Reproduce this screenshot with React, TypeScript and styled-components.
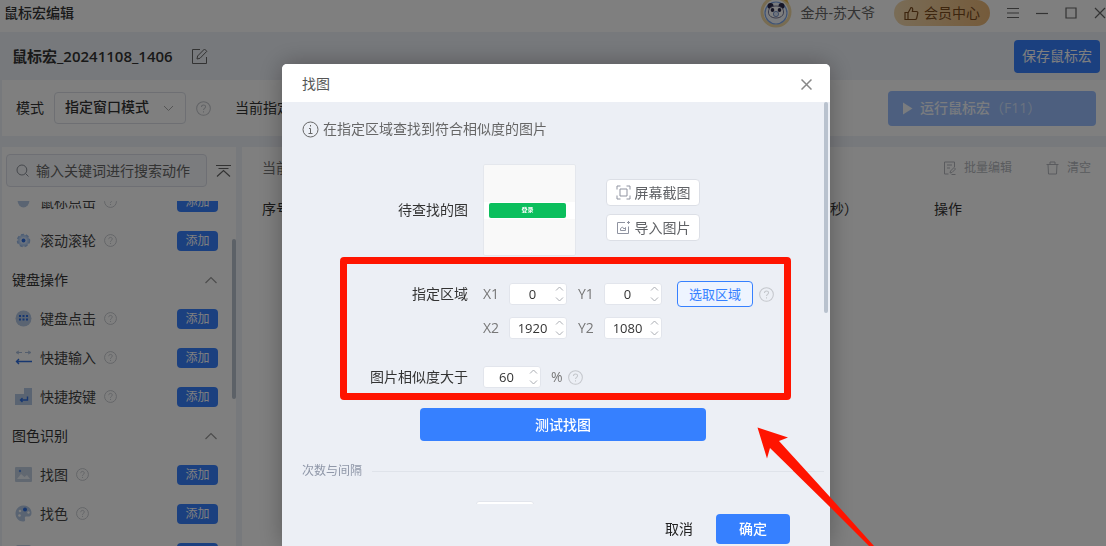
import React from "react";
import styled, { createGlobalStyle, css } from "styled-components";

const Global = createGlobalStyle`
  * { box-sizing: border-box; }
  body {
    margin: 0;
    background: #eff2f8;
    color: #333;
    font: 14px/20px "Open Sans", "Noto Sans CJK SC", sans-serif;
    overflow: hidden;
  }
  button, input, select { font: inherit; color: inherit; }
  button { cursor: pointer; }
  svg { display: block; flex: none; }
`;

const blue = "#3680ff";

const bareButton = css`
  display: flex;
  align-items: center;
  border: 0;
  padding: 0;
  background: none;
  white-space: nowrap;
`;

const Page = styled.div`
  display: flex;
  flex-direction: column;
  height: 100vh;
  overflow: hidden;
`;

const TitleBar = styled.header`
  display: flex;
  align-items: center;
  justify-content: space-between;
  height: 32px;
  padding: 0 0 6px 4px;
  background: #fff;
`;

const WindowTitle = styled.span`
  font-weight: 500;
`;

const TitleTools = styled.div`
  display: flex;
  align-items: center;
  color: #666;
`;

const UserName = styled.span`
  margin: 0 19px 0 8px;
`;

const MemberButton = styled.button`
  ${bareButton}
  gap: 5px;
  height: 26px;
  margin-right: 17px;
  padding: 0 10px;
  border-radius: 13px;
  background: linear-gradient(90deg, #f3d9ae, #eab676);
  color: #7a4a1c;
`;

const WindowButtons = styled.div`
  display: flex;
  gap: 17px;
`;

const IconButton = styled.button`
  ${bareButton}
  color: #666;
`;

const NameBar = styled.div`
  display: flex;
  align-items: center;
  gap: 18px;
  height: 48px;
  padding: 0 6px 0 12px;
`;

const MacroName = styled.h1`
  margin: 0;
  font-size: 15px;
  line-height: 20px;
  font-weight: 600;
`;

const SaveButton = styled.button`
  ${bareButton}
  justify-content: center;
  width: 86px;
  height: 33px;
  margin-left: auto;
  border-radius: 4px;
  background: ${blue};
  color: #fff;
`;

const ModeBar = styled.div`
  display: flex;
  align-items: center;
  height: 56px;
  margin-left: 2px;
  padding: 0 10px 0 14px;
  background: #fff;
`;

const SelectBox = styled.div`
  display: grid;
  align-items: center;
  width: 132px;
  margin: 0 10px;
  > * { grid-area: 1 / 1; }
  > svg { justify-self: end; margin-right: 12px; pointer-events: none; }
`;

const ModeSelect = styled.select`
  appearance: none;
  height: 32px;
  width: 100%;
  padding: 0 10px 2px;
  border: 1px solid #dcdfe6;
  border-radius: 4px;
  background: #fff;
  font-weight: 500;
`;

const TargetLabel = styled.span`
  margin-left: 24px;
`;

const RunButton = styled.button`
  ${bareButton}
  gap: 7px;
  width: 208px;
  height: 35px;
  margin-left: auto;
  padding: 0 14px;
  border-radius: 4px;
  background: #9abfff;
  color: #f4f8ff;
  font-weight: 500;
  small { font-size: 14px; font-weight: 400; color: #d4e4ff; }
`;

const Workspace = styled.div`
  display: flex;
  flex: 1;
  gap: 6px;
  min-height: 0;
  padding: 11px 0 0 2px;
`;

const Sidebar = styled.aside`
  display: flex;
  flex-direction: column;
  width: 234px;
  flex: none;
  background: #fff;
`;

const SearchRow = styled.div`
  display: flex;
  align-items: center;
  gap: 9px;
  padding: 7px 5px 14px 4px;
`;

const SearchBox = styled.label`
  display: flex;
  align-items: center;
  gap: 6px;
  flex: 1;
  min-width: 0;
  height: 33px;
  padding: 0 8px;
  border: 1px solid #dcdfe8;
  border-radius: 4px;
  background: #f7f9fc;
  color: #8a8f99;
`;

const SearchInput = styled.input`
  flex: 1;
  min-width: 0;
  padding: 0;
  border: 0;
  background: none;
  outline: 0;
  &::placeholder { color: #666; opacity: 1; }
`;

const ListViewport = styled.div`
  display: flex;
  flex: 1;
  min-height: 0;
  overflow: hidden;
`;

const ActionList = styled.ul`
  flex: 1;
  margin: -19px 0 0;
  padding: 0 14px 0 10px;
  list-style: none;
`;

const ListThumb = styled.div`
  width: 4px;
  height: 160px;
  margin-top: 38px;
  border-radius: 2px;
  background: #b9c2ce;
`;

const SectionRow = styled.li`
  display: flex;
  align-items: center;
  justify-content: space-between;
  height: 39px;
  color: #333;
`;

const ActionRow = styled.li`
  display: flex;
  align-items: center;
  height: 39px;
  padding-left: 3px;
`;

const ActionName = styled.span`
  margin: 0 8px 0 8px;
  color: #444;
`;

const AddButton = styled.button`
  ${bareButton}
  justify-content: center;
  width: 41px;
  height: 20px;
  margin-left: auto;
  border-radius: 4px;
  background: ${blue};
  color: #fff;
  font-size: 12px;
`;

const Main = styled.main`
  flex: 1;
  min-width: 0;
  background: #fff;
`;

const MainTools = styled.div`
  display: flex;
  align-items: center;
  gap: 34px;
  height: 42px;
  padding: 0 15px 0 20px;
  color: #777;
`;

const ListTitle = styled.span`
  margin-right: auto;
`;

const ToolButton = styled.button`
  ${bareButton}
  gap: 8px;
  color: #b4b7bd;
  font-size: 12px;
`;

const StepTable = styled.table`
  width: 100%;
  table-layout: fixed;
  border-collapse: collapse;
`;

const StepHead = styled.th<{ $width?: number }>`
  width: ${(p) => (p.$width ? `${p.$width}px` : "auto")};
  height: 40px;
  padding: 0 0 0 20px;
  text-align: left;
  font-weight: 400;
  white-space: nowrap;
`;

const Scrim = styled.div`
  position: fixed;
  inset: 0;
  display: flex;
  justify-content: center;
  padding: 64px 0 0 6px;
  background: rgba(0, 0, 0, 0.5);
`;

const Dialog = styled.section`
  position: relative;
  display: flex;
  flex-direction: column;
  width: 548px;
  max-width: 100%;
  border-radius: 5px 5px 0 0;
  background: #eceff5;
  box-shadow: 0 0 24px rgba(0, 0, 0, 0.3);
`;

const DialogHead = styled.header`
  display: flex;
  align-items: center;
  justify-content: space-between;
  flex: none;
  height: 38px;
  padding: 2px 18px 0 20px;
  border-radius: 5px 5px 0 0;
  background: #fff;
  color: #555;
`;

const DialogTitle = styled.h2`
  margin: 0;
  font-size: 14px;
  line-height: 20px;
  font-weight: 400;
`;

const DialogBody = styled.div`
  display: flex;
  flex: 1;
  min-height: 0;
  overflow: hidden;
  padding-right: 2px;
`;

const Form = styled.form`
  flex: 1;
  min-width: 0;
`;

const DialogThumb = styled.div`
  width: 4px;
  height: 211px;
  border-radius: 2px;
  background: #b9c2ce;
`;

const Hint = styled.p`
  display: flex;
  align-items: center;
  gap: 4px;
  height: 54px;
  margin: 0 0 8px;
  padding-left: 20px;
  color: #666;
`;

const Row = styled.div<{ $space?: number }>`
  display: grid;
  grid-template-columns: 186px 1fr;
  gap: 15px;
  align-items: center;
  margin-bottom: ${(p) => p.$space ?? 0}px;
`;

const RowLabel = styled.span`
  text-align: right;
`;

const Field = styled.div<{ $gap?: number }>`
  display: flex;
  align-items: center;
  gap: ${(p) => p.$gap ?? 0}px;
  color: #777;
`;

const Preview = styled.div`
  display: flex;
  flex-direction: column;
  justify-content: center;
  width: 93px;
  height: 92px;
  border: 1px solid #e4e7ed;
  border-radius: 2px;
  background: #f9f9f9;
`;

const PreviewStrip = styled.div`
  padding: 1px 9px 1px 5px;
  background: #fff;
`;

const PreviewLogin = styled.div`
  height: 15px;
  border-radius: 2px;
  background: #0bbf5d;
  color: #fff;
  font-size: 6px;
  line-height: 15px;
  font-weight: 700;
  text-align: center;
`;

const PictureButtons = styled.div`
  display: flex;
  flex-direction: column;
  gap: 8px;
`;

const PictureButton = styled.button`
  ${bareButton}
  justify-content: center;
  gap: 4px;
  width: 94px;
  height: 27px;
  border: 1px solid #dcdfe6;
  border-radius: 4px;
  background: #fff;
  color: #606266;
  > svg { color: #8f93a0; }
`;

const CoordLabel = styled.label`
  display: flex;
  align-items: center;
`;

const CoordName = styled.span`
  width: 26px;
`;

const NumberBox = styled.span`
  display: inline-flex;
  align-items: center;
  width: 58px;
  height: 22px;
  padding-right: 2px;
  border: 1px solid #e2e5ec;
  border-radius: 3px;
  background: #fff;
`;

const NumberInput = styled.input`
  flex: 1;
  min-width: 0;
  padding: 0;
  border: 0;
  outline: 0;
  background: none;
  color: #333;
  font-size: 13px;
  line-height: 20px;
  text-align: center;
`;

const PickButton = styled.button`
  ${bareButton}
  justify-content: center;
  width: 76px;
  height: 26px;
  margin: 0 6px 0 4px;
  border: 1px solid ${blue};
  border-radius: 4px;
  background: #eef4ff;
  color: ${blue};
  font-size: 13px;
`;

const TestButton = styled.button`
  ${bareButton}
  justify-content: center;
  width: 286px;
  height: 33px;
  margin-left: 138px;
  border-radius: 4px;
  background: ${blue};
  color: #fff;
  font-weight: 500;
`;

const Divider = styled.div`
  display: flex;
  align-items: center;
  gap: 10px;
  height: 60px;
  padding-left: 20px;
  color: #8f97a8;
  font-size: 12px;
  &::after { content: ""; flex: 1; height: 1px; background: #dfe3ea; }
`;

const CountRow = styled.div`
  padding-left: 194px;
`;

const DialogFoot = styled.footer`
  display: flex;
  align-items: center;
  justify-content: flex-end;
  gap: 23px;
  flex: none;
  height: 42px;
  padding: 7px 40px 0 0;
`;

const CancelButton = styled.button`
  ${bareButton}
  color: #222;
`;

const OkButton = styled.button`
  ${bareButton}
  justify-content: center;
  width: 74px;
  height: 30px;
  border-radius: 4px;
  background: ${blue};
  color: #fff;
  font-weight: 500;
`;

const Frame = styled.div`
  position: absolute;
  left: 58px;
  top: 193px;
  width: 451px;
  height: 143px;
  border: 7px solid #ff1400;
  border-radius: 4px;
  pointer-events: none;
`;

const Arrow = styled.svg`
  position: absolute;
  left: 475px;
  top: 363px;
  pointer-events: none;
`;

const Line = ({ d, w = 16, h = w, box = `0 0 ${w} ${h}`, sw = 1, color = "currentColor" }: {
  d: string; w?: number; h?: number; box?: string; sw?: number; color?: string;
}) => (
  <svg width={w} height={h} viewBox={box} fill="none" stroke={color} strokeWidth={sw} aria-hidden="true">
    <path d={d} />
  </svg>
);

const Help = ({ size = 13 }: { size?: number }) => (
  <svg width={size} height={size} viewBox="0 0 16 16" fill="none" stroke="#c4c7cc" strokeWidth="1.1" aria-hidden="true">
    <circle cx="8" cy="8" r="7.3" />
    <path d="M5.8 6.4C5.8 3.4 10.2 3.5 10.2 6.2C10.2 7.8 8 7.8 8 9.6M8 11v1.3" />
  </svg>
);

const Avatar = () => (
  <svg width="32" height="26" viewBox="0 2 32 26" overflow="visible" aria-hidden="true">
    <circle cx="16" cy="14" r="14" fill="#fff" stroke="#f0d9a4" strokeWidth="3" />
    <path d="M21 0l6 1 2 5z" fill="#e9b94c" />
    <circle cx="16" cy="15" r="11" fill="#f4f8ff" stroke="#7ea6e8" strokeWidth="1.2" />
    <circle cx="10.5" cy="8" r="3" fill="#2c2b4a" />
    <circle cx="21.5" cy="8" r="3" fill="#2c2b4a" />
    <path d="M8.5 14C8 6 24 6 23.500 14C24 22 8 22 8.500 14z" fill="#fff" stroke="#55557a" strokeWidth=".8" />
    <ellipse cx="12.500" cy="12" rx="1.800" ry="2" fill="#2c2b4a" />
    <ellipse cx="19.500" cy="12" rx="1.800" ry="2" fill="#2c2b4a" />
    <circle cx="16" cy="16" r="2.600" fill="#dfe9fb" stroke="#6f8fc8" strokeWidth=".9" />
  </svg>
);

const art: Record<string, React.ReactNode> = {
  mouse: <path d="M2.500 3h12v4a6 7.500 0 0 1-12 0z" fill="#b4c8e4" />,
  wheel: (
    <>
      <circle cx="8.500" cy="8.500" r="6" fill="#b9d2f6" stroke="#9dbdea" strokeDasharray="3 2" strokeWidth="1.500" />
      <circle cx="8.500" cy="8.500" r="3.600" fill="#d5e5fc" />
      <circle cx="8.500" cy="8.500" r="1.900" fill="#2f6fe0" />
    </>
  ),
  keys: (
    <>
      <circle cx="8.500" cy="8.500" r="8" fill="#b4c8e4" />
      <path d="M4 6h2M7.500 6h2M11 6h2M4 9.500h2M7.500 9.500h2M11 9.500h2" stroke="#2f6fe0" strokeWidth="1.800" />
    </>
  ),
  swap: (
    <>
      <path d="M2 3.500h5M10 3.500h5M13 2l3 1.500-3 1.500M4 2L1 3.500 4 5" stroke="#a9bdda" fill="none" />
      <path d="M17 12.500H1.500M4 10l-2.500 2.500L4 15" stroke="#2f6fe0" strokeWidth="1.400" fill="none" />
    </>
  ),
  enter: (
    <>
      <path d="M9 0h8v17H0V6h9z" fill="#b4c8e4" />
      <path d="M12.500 8.500V12H5.500M7.500 10L5.500 12l2 2" stroke="#2f6fe0" strokeWidth="1.400" fill="none" />
    </>
  ),
  picture: (
    <>
      <rect x="0" y="1" width="17" height="15" rx="1" fill="#c3d0e2" />
      <path d="M2 13l4-5 3.500 3 2.500-2 3 4z" fill="#edf2f9" />
      <circle cx="5" cy="5" r="1.200" fill="#5d8fe0" />
    </>
  ),
  palette: (
    <>
      <path d="M8.500.5C13 .5 16.500 3.500 16.500 8c0 3-2 4-4.500 3.500-2-.5-2.500 1-2 2.500.6 1.800-.5 2.500-2 2.500C4 16.500.5 13 .5 8.500S4 .5 8.500.5z" fill="#b4c8e4" />
      <circle cx="10" cy="4.500" r="2" fill="#2f6fe0" />
      <circle cx="5" cy="6" r="1.300" fill="#fff" />
      <circle cx="4.500" cy="10.500" r="1.300" fill="#fff" />
      <circle cx="13.500" cy="7.500" r="1.200" fill="#fff" />
    </>
  ),
  text: <rect x="1" y="1" width="15" height="15" rx="2" fill="#c3d0e2" />,
};

const Action = ({ icon, name }: { icon: string; name: string }) => (
  <ActionRow>
    <svg width="17" height="17" viewBox="0 0 17 17" aria-hidden="true">{art[icon]}</svg>
    <ActionName>{name}</ActionName>
    <Help />
    <AddButton type="button">添加</AddButton>
  </ActionRow>
);

const Section = ({ name }: { name: string }) => (
  <SectionRow>
    {name}
    <Line w={14} h={8} d="M1.500 7L7 1.500L12.500 7" color="#999" sw={1.200} />
  </SectionRow>
);

const Stepper = ({ value, label }: { value: string; label?: string }) => (
  <NumberBox>
    <NumberInput type="text" defaultValue={value} aria-label={label} />
    <Line w={9} h={18} d="M1 5.500L4.500 2L8 5.500M1 12.500L4.500 16L8 12.500" color="#aaadb3" />
  </NumberBox>
);

const Coord = ({ name, value }: { name: string; value: string }) => (
  <CoordLabel>
    <CoordName>{name}</CoordName>
    <Stepper value={value} />
  </CoordLabel>
);

export default function App() {
  return (
    <>
      <Global />
      <Page>
        <TitleBar>
          <WindowTitle>鼠标宏编辑</WindowTitle>
          <TitleTools>
            <Avatar />
            <UserName>金舟-苏大爷</UserName>
            <MemberButton type="button">
              <Line w={15} d="M1 6.500h3v7H1zM4 7l3-5.500c1.800 0 2 1.500 1.400 4h4c1.300 0 1.600.8 1.400 1.700l-1.100 5c-.3.900-.8 1.300-1.600 1.300H4" sw={1.200} />
              会员中心
            </MemberButton>
            <WindowButtons>
              <IconButton type="button" aria-label="菜单"><Line w={12} d="M0 1.500h12M0 6h12M0 10.500h12" /></IconButton>
              <IconButton type="button" aria-label="最小化"><Line w={12} d="M0 6.500h12" sw={1.200} /></IconButton>
              <IconButton type="button" aria-label="最大化"><Line w={12} d="M1 1h10v10H1z" sw={1.200} /></IconButton>
              <IconButton type="button" aria-label="关闭窗口"><Line w={12} d="M1 1l10 10M11 1L1 11" sw={1.200} /></IconButton>
            </WindowButtons>
          </TitleTools>
        </TitleBar>

        <NameBar>
          <MacroName>鼠标宏_20241108_1406</MacroName>
          <IconButton type="button" aria-label="重命名">
            <Line w={17} d="M9 1.500H1.500v14H15.500V9M6 11l.6-3L13.500 1l2.300 2.300L9 10.300z" />
          </IconButton>
          <SaveButton type="button">保存鼠标宏</SaveButton>
        </NameBar>

        <ModeBar>
          <label htmlFor="mode">模式</label>
          <SelectBox>
            <ModeSelect id="mode"><option>指定窗口模式</option></ModeSelect>
            <Line w={11} h={7} d="M1 1l4.500 4.500L10 1" color="#aaa" />
          </SelectBox>
          <Help size={15} />
          <TargetLabel>当前指定窗口</TargetLabel>
          <RunButton type="button">
            <svg width="11" height="13" viewBox="0 0 11 13" fill="currentColor" aria-hidden="true"><path d="M1 .5l9.500 6L1 12.500z" /></svg>
            <span>运行鼠标宏<small>（F11）</small></span>
          </RunButton>
        </ModeBar>

        <Workspace>
          <Sidebar>
            <SearchRow>
              <SearchBox>
                <Line w={15} d="M11.800 7A4.900 5 0 1 1 2 7A4.900 5 0 1 1 11.800 7M10.500 10.500l3 3" />
                <SearchInput type="text" aria-label="搜索动作" placeholder="输入关键词进行搜索动作" />
              </SearchBox>
              <IconButton type="button" aria-label="全部收起">
                <Line w={15} h={14} d="M0 1.500h15M2.500 4.500h10M1 12.500l6.500-6 6.500 6" sw={1.200} />
              </IconButton>
            </SearchRow>
            <ListViewport>
              <ActionList>
                <Action icon="mouse" name="鼠标点击" />
                <Action icon="wheel" name="滚动滚轮" />
                <Section name="键盘操作" />
                <Action icon="keys" name="键盘点击" />
                <Action icon="swap" name="快捷输入" />
                <Action icon="enter" name="快捷按键" />
                <Section name="图色识别" />
                <Action icon="picture" name="找图" />
                <Action icon="palette" name="找色" />
                <Action icon="text" name="文字识别" />
              </ActionList>
              <ListThumb />
            </ListViewport>
          </Sidebar>

          <Main>
            <MainTools>
              <ListTitle>当前动作</ListTitle>
              <ToolButton type="button">
                <Line w={13} h={14} d="M11.500 6V1H1.500v12h4M4 4h5M4 7h3M7 12l.5-2L11 6.500l1.500 1.500L9 11.500zM8.500 13.500h4" />
                批量编辑
              </ToolButton>
              <ToolButton type="button">
                <Line w={13} h={14} d="M.5 3.500h12M4 3.500V1h5v2.500M2 3.500l.5 9.500h8l.5-9.500" />
                清空
              </ToolButton>
            </MainTools>
            <StepTable>
              <thead>
                <tr>
                  <StepHead>序号</StepHead>
                  <StepHead $width={160}>延时（毫秒）</StepHead>
                  <StepHead $width={192}>操作</StepHead>
                </tr>
              </thead>
            </StepTable>
          </Main>
        </Workspace>
      </Page>

      <Scrim>
        <Dialog role="dialog" aria-labelledby="dialog-title">
          <DialogHead>
            <DialogTitle id="dialog-title">找图</DialogTitle>
            <IconButton type="button" aria-label="关闭"><Line w={11} d="M.5.5l10 10M10.500.5l-10 10" color="#888" sw={1.500} /></IconButton>
          </DialogHead>
          <DialogBody>
            <Form>
              <Hint>
                <Line w={17} d="M16 8.500A7.500 7.500 0 1 1 1 8.500A7.500 7.500 0 1 1 16 8.500M8.500 4v1.500M7 7.500h1.500v5M6.500 12.500h4" />
                在指定区域查找到符合相似度的图片
              </Hint>
              <Row $space={25}>
                <RowLabel>待查找的图</RowLabel>
                <Field $gap={30}>
                  <Preview>
                    <PreviewStrip><PreviewLogin>登录</PreviewLogin></PreviewStrip>
                  </Preview>
                  <PictureButtons>
                    <PictureButton type="button">
                      <Line w={15} d="M1 4.500V1h3.500M10.500 1H14v3.500M14 10.500V14h-3.500M4.500 14H1v-3.500M4 4h7v7H4z" />
                      屏幕截图
                    </PictureButton>
                    <PictureButton type="button">
                      <Line w={15} d="M9 2.500H1.500v11H12.500V6.500M12.500 1v3M11 2.500h3M4.500 10.500V8.500L6.500 7l1.500 2L9.500 7.500v3z" />
                      导入图片
                    </PictureButton>
                  </PictureButtons>
                </Field>
              </Row>
              <Row $space={10}>
                <RowLabel>指定区域</RowLabel>
                <Field $gap={11}>
                  <Coord name="X1" value="0" />
                  <Coord name="Y1" value="0" />
                  <Field>
                    <PickButton type="button">选取区域</PickButton>
                    <Help size={15} />
                  </Field>
                </Field>
              </Row>
              <Row $space={27}>
                <span />
                <Field $gap={11}>
                  <Coord name="X2" value="1920" />
                  <Coord name="Y2" value="1080" />
                </Field>
              </Row>
              <Row $space={20}>
                <RowLabel>图片相似度大于</RowLabel>
                <Field $gap={10}>
                  <Stepper value="60" label="图片相似度大于" />
                  <Field $gap={5}>%<Help size={15} /></Field>
                </Field>
              </Row>
              <TestButton type="button">测试找图</TestButton>
              <Divider>次数与间隔</Divider>
              <CountRow><Stepper value="" label="次数" /></CountRow>
            </Form>
            <DialogThumb />
          </DialogBody>
          <DialogFoot>
            <CancelButton type="button">取消</CancelButton>
            <OkButton type="button">确定</OkButton>
          </DialogFoot>
          <Frame />
          <Arrow width="118" height="119" viewBox="0 0 118 119" aria-hidden="true">
            <path d="M.5.5L31 10.500L22 14L73 70L117 119L112 119L73 80L13 21L10 31.500z" fill="#ff1400" />
          </Arrow>
        </Dialog>
      </Scrim>
    </>
  );
}
